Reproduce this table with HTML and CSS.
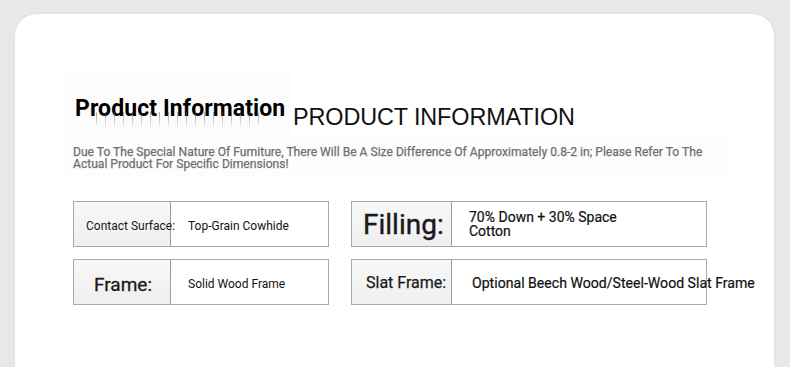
FILE: index.html
```html
<!DOCTYPE html>
<html>
<head>
<meta charset="utf-8">
<link rel="stylesheet" href="styles.css">
</head>
<body>
<div class="card">
  <div class="heading-row">
    <div class="title-box">
      <span class="reflection" aria-hidden="true"></span>
      <span class="title">Product Information</span>
    </div>
    <div class="title-en">PRODUCT INFORMATION</div>
  </div>
  <div class="note">Due To The Special Nature Of Furniture, There Will Be A Size Difference Of Approximately 0.8-2 in; Please Refer To The Actual Product For Specific Dimensions!</div>
  <div class="specs">
    <div class="spec spec-left">
      <div class="label label-sm">Contact Surface:</div>
      <div class="value">Top-Grain Cowhide</div>
    </div>
    <div class="spec spec-right">
      <div class="label label-xl">Filling:</div>
      <div class="value value-lg value-wrap">70% Down + 30% Space Cotton</div>
    </div>
    <div class="spec spec-left">
      <div class="label label-lg">Frame:</div>
      <div class="value">Solid Wood Frame</div>
    </div>
    <div class="spec spec-right">
      <div class="label label-md">Slat Frame:</div>
      <div class="value value-xl">Optional Beech Wood/Steel-Wood Slat Frame</div>
    </div>
  </div>
</div>
</body>
</html>
```

FILE: styles.css
```css
html, body {
  margin: 0;
  padding: 0;
  height: 100%;
  overflow: hidden;
}
body {
  background: #e8e8e8;
  font-family: Roboto, "Liberation Sans", sans-serif;
}
.card {
  margin: 14px 16px 0 15px;
  height: 360px;
  background: #fff;
  border-radius: 22px 22px 0 0;
  box-shadow: 0 0 3px rgba(0,0,0,0.06);
  padding: 58px 0 0 49px;
  box-sizing: border-box;
}
.heading-row {
  display: flex;
  align-items: flex-start;
}
.title-box {
  position: relative;
  width: 226px;
  height: 68px;
  background: #fcfcfc;
  padding: 25px 0 0 11px;
  box-sizing: border-box;
  overflow: hidden;
}
.title {
  position: relative;
  z-index: 1;
  font-weight: 700;
  font-size: 23px;
  line-height: 24px;
  letter-spacing: 0.1px;
  color: #000;
  white-space: nowrap;
}
.reflection {
  position: absolute;
  z-index: 2;
  left: 28px;
  top: 40px;
  width: 170px;
  height: 14px;
  background:
    repeating-linear-gradient(90deg, transparent 0 4px, rgba(90,90,90,0.55) 4px 5px, transparent 5px 9px);
  -webkit-mask-image: linear-gradient(#000, rgba(0,0,0,0.2));
  mask-image: linear-gradient(#000, rgba(0,0,0,0.2));
  border-radius: 6px;
}
.title-en {
  font-family: "Liberation Sans", Arial, sans-serif;
  font-size: 23.4px;
  line-height: 26px;
  color: #111;
  margin: 32px 0 0 3px;
  letter-spacing: -0.1px;
}
.note {
  width: 666px;
  box-sizing: border-box;
  padding: 6px 9px 8px;
  background: #fdfdfd;
  font-size: 12.1px;
  font-weight: 400;
  line-height: 12px;
  color: #6f6f6f;
  -webkit-text-stroke: 0.25px #6f6f6f;
}
.specs {
  display: grid;
  grid-template-columns: 256px 356px;
  column-gap: 22px;
  row-gap: 12px;
  margin: 23px 0 0 9px;
}
.spec {
  display: flex;
  height: 46px;
  border: 1px solid #a9a9a9;
  box-sizing: border-box;
}
.label {
  display: flex;
  align-items: center;
  flex-shrink: 0;
  background: linear-gradient(#f8f8f8, #efefef);
  border-right: 1px solid #9a9a9a;
  box-sizing: border-box;
  color: #1a1a1a;
  white-space: nowrap;
}
.spec-left .label { width: 97px; }
.spec-right .label { width: 100px; }
.label-sm { font-size: 12px; padding-left: 12px; padding-top: 3px; }
.label-lg { font-size: 19px; padding-left: 20px; padding-top: 4px; -webkit-text-stroke: 0.3px #1a1a1a; }
.label-xl { font-size: 28px; padding-left: 11px; padding-top: 0; -webkit-text-stroke: 0.4px #1a1a1a; }
.label-md { font-size: 16px; padding-left: 14px; padding-top: 1px; -webkit-text-stroke: 0.25px #1a1a1a; }
.value {
  display: flex;
  align-items: center;
  font-size: 12px;
  color: #111;
  padding-left: 17px;
  padding-top: 3px;
  white-space: nowrap;
}
.value-lg {
  font-size: 14px;
  line-height: 14px;
  padding-left: 17px;
  padding-top: 0;
  white-space: normal;
  width: 170px;
  -webkit-text-stroke: 0.2px #111;
}
.value-xl {
  font-size: 14.1px;
  padding-left: 20px;
  padding-top: 2px;
  -webkit-text-stroke: 0.2px #111;
}
```
